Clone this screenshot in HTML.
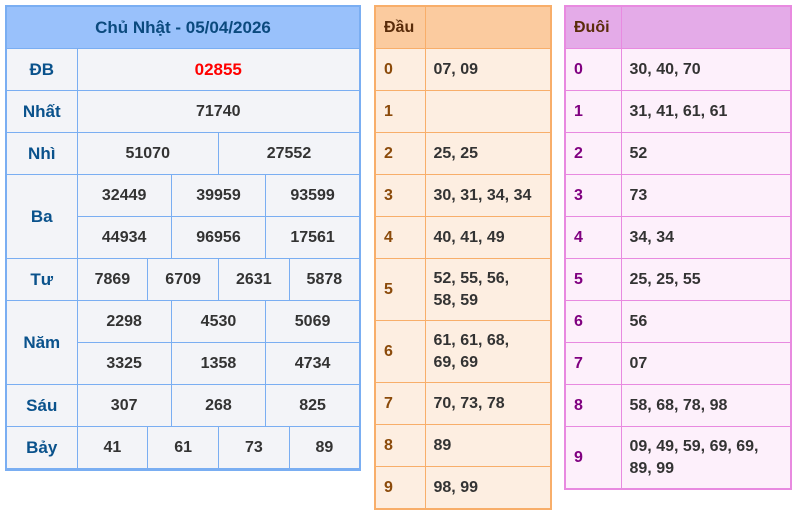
<!DOCTYPE html>
<html><head><meta charset="utf-8"><style>
body{margin:0;background:#fff;font-family:"Liberation Sans",Arial,sans-serif;font-weight:bold;font-size:16px;color:#333}
table{position:absolute;border-collapse:collapse;table-layout:fixed}
td{padding:0;text-align:center;vertical-align:middle}
#L{left:5px;top:5px;width:356px;border:2px solid #7aaef2;border-bottom-width:3px;background:#f3f4f8}
#L td{border:1px solid #7aaef2;height:41px}
#L .h{background:#99c1fb;color:#0b4a7e;font-size:17px;height:41px}
#L .lb{color:#0a528c;font-size:17px}
#L .r{color:#f00;font-size:17px}
#D{left:374px;top:5px;width:178px;border:2px solid #f8ae6a;background:#fdeee1}
#D td{border:1px solid #f8ae6a;height:41px;text-align:left;padding-left:8px}
#D .k{color:#8b4a0a}
#D .h,#U .h{height:41px}
#D .h{background:#fbcb9f;color:#5a2c0a}
#U{left:564px;top:5px;width:228px;border:2px solid #e88ae0;background:#fdf0fb}
#U td{border:1px solid #e88ae0;height:41px;text-align:left;padding-left:8px}
#U .k{color:#800080}
#U .h{background:#e4abe8;color:#5a2c0a}
.t{height:61px!important;line-height:22px}
</style></head><body>
<table id="L">
<colgroup><col style="width:71px"><col span="12"></colgroup>
<tr><td class="h" colspan="13">Chủ Nhật - 05/04/2026</td></tr>
<tr><td class="lb">ĐB</td><td colspan="12" class="r">02855</td></tr>
<tr><td class="lb">Nhất</td><td colspan="12">71740</td></tr>
<tr><td class="lb">Nhì</td><td colspan="6">51070</td><td colspan="6">27552</td></tr>
<tr><td class="lb" rowspan="2">Ba</td><td colspan="4">32449</td><td colspan="4">39959</td><td colspan="4">93599</td></tr>
<tr><td colspan="4">44934</td><td colspan="4">96956</td><td colspan="4">17561</td></tr>
<tr><td class="lb">Tư</td><td colspan="3">7869</td><td colspan="3">6709</td><td colspan="3">2631</td><td colspan="3">5878</td></tr>
<tr><td class="lb" rowspan="2">Năm</td><td colspan="4">2298</td><td colspan="4">4530</td><td colspan="4">5069</td></tr>
<tr><td colspan="4">3325</td><td colspan="4">1358</td><td colspan="4">4734</td></tr>
<tr><td class="lb">Sáu</td><td colspan="4">307</td><td colspan="4">268</td><td colspan="4">825</td></tr>
<tr><td class="lb">Bảy</td><td colspan="3">41</td><td colspan="3">61</td><td colspan="3">73</td><td colspan="3">89</td></tr>
</table>
<table id="D">
<colgroup><col style="width:50px"><col></colgroup>
<tr><td class="h">Đầu</td><td class="h"></td></tr>
<tr><td class="k">0</td><td>07, 09</td></tr>
<tr><td class="k">1</td><td></td></tr>
<tr><td class="k">2</td><td>25, 25</td></tr>
<tr><td class="k">3</td><td>30, 31, 34, 34</td></tr>
<tr><td class="k">4</td><td>40, 41, 49</td></tr>
<tr><td class="k t">5</td><td class="t">52, 55, 56,<br>58, 59</td></tr>
<tr><td class="k t">6</td><td class="t">61, 61, 68,<br>69, 69</td></tr>
<tr><td class="k">7</td><td>70, 73, 78</td></tr>
<tr><td class="k">8</td><td>89</td></tr>
<tr><td class="k">9</td><td>98, 99</td></tr>
</table>
<table id="U">
<colgroup><col style="width:56px"><col></colgroup>
<tr><td class="h">Đuôi</td><td class="h"></td></tr>
<tr><td class="k">0</td><td>30, 40, 70</td></tr>
<tr><td class="k">1</td><td>31, 41, 61, 61</td></tr>
<tr><td class="k">2</td><td>52</td></tr>
<tr><td class="k">3</td><td>73</td></tr>
<tr><td class="k">4</td><td>34, 34</td></tr>
<tr><td class="k">5</td><td>25, 25, 55</td></tr>
<tr><td class="k">6</td><td>56</td></tr>
<tr><td class="k">7</td><td>07</td></tr>
<tr><td class="k">8</td><td>58, 68, 78, 98</td></tr>
<tr><td class="k t">9</td><td class="t">09, 49, 59, 69, 69,<br>89, 99</td></tr>
</table>
</body></html>
